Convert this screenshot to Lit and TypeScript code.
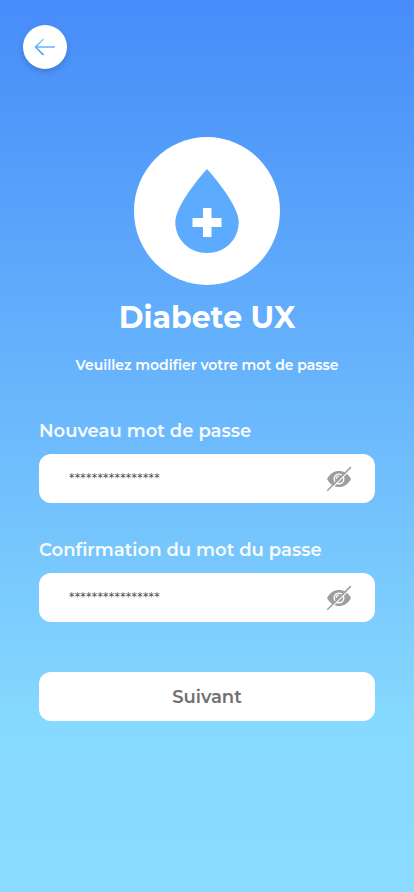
import { LitElement, html, svg, css } from "lit";
import { customElement, property, state } from "lit/decorators.js";

@customElement("password-field")
class PasswordField extends LitElement {
  @property() label = "";
  @state() private visible = false;

  static styles = css`
    :host {
      display: block;
      font-family: Montserrat, Inter, sans-serif;
    }
    .label {
      display: block;
      font-size: 18px;
      line-height: 24px;
      font-weight: 600;
      color: #fff;
      opacity: 0.95;
      margin-bottom: 11px;
      white-space: nowrap;
    }
    .box {
      display: flex;
      align-items: center;
      height: 49px;
      box-sizing: border-box;
      padding: 0 24px 0 30px;
      border-radius: 12px;
      background: #fff;
    }
    .input {
      flex: 1;
      min-width: 0;
      height: 49px;
      box-sizing: border-box;
      padding: 0;
      border: 0;
      outline: 0;
      background: transparent;
      font: 400 14px/20px Montserrat, Inter, sans-serif;
      color: #555;
    }
    .input::placeholder {
      color: #555;
      opacity: 1;
    }
    .toggle {
      display: flex;
      padding: 0;
      border: 0;
      background: none;
      cursor: pointer;
    }
    .icon {
      overflow: visible;
    }
  `;

  render() {
    return html`
      <label class="label" for="field">${this.label}</label>
      <div class="box">
        <input
          class="input"
          id="field"
          type=${this.visible ? "text" : "password"}
          placeholder="****************"
          autocomplete="new-password"
        />
        <button
          class="toggle"
          type="button"
          aria-label="Afficher le mot de passe"
          @click=${() => (this.visible = !this.visible)}
        >
          <svg class="icon" width="24" height="24" viewBox="0 0 24 24" fill="none">
            <path d="M0 12C3 6.500 7 4 12 4S21 6.500 24 12C21 17.500 17 20 12 20S3 17.500 0 12Z" fill="#9e9e9e" />
            <circle cx="12" cy="12" r="4.800" stroke="#fff" stroke-width="1.400" />
            <path d="M12 9.200A2.800 2.800 0 0 0 9.200 12" stroke="#fff" stroke-width="1.100" />
            ${this.visible
              ? null
              : svg`<path d="M1.200 24.600L24.800 1" stroke="#fff" stroke-width="1.300" />
                  <path d="M0.200 23.800L23.900 0.100" stroke="#9e9e9e" stroke-width="1.500" />`}
          </svg>
        </button>
      </div>
    `;
  }
}

@customElement("app-root")
class AppRoot extends LitElement {
  static styles = css`
    :host {
      display: block;
      min-height: 100vh;
      box-sizing: border-box;
      padding: 25px 39px 40px;
      background: linear-gradient(#478cf9 0%, #67b4fc 42%, #87daff 82%, #8adbff 100%);
      font-family: Montserrat, Inter, sans-serif;
      font-variant-ligatures: none;
      color: #fff;
    }
    .back {
      display: flex;
      align-items: center;
      justify-content: center;
      width: 44px;
      height: 44px;
      margin-left: -16px;
      padding: 0;
      border: 0;
      border-radius: 50%;
      background: #fff;
      box-shadow: 0 3px 6px rgba(0, 0, 0, 0.16);
      cursor: pointer;
    }
    .brand {
      display: flex;
      flex-direction: column;
      align-items: center;
      margin-top: 68px;
      text-align: center;
    }
    .title {
      margin: 13px 0 0;
      font-size: 30px;
      line-height: 40px;
      font-weight: 700;
    }
    .subtitle {
      margin: 17px 0 0;
      font-size: 14px;
      line-height: 20px;
      font-weight: 600;
    }
    .form {
      display: flex;
      flex-direction: column;
      gap: 35px;
      margin-top: 44px;
    }
    .submit {
      height: 49px;
      margin-top: 15px;
      border: 0;
      border-radius: 12px;
      background: #fff;
      color: #707070;
      font: 600 18px/24px Montserrat, Inter, sans-serif;
      cursor: pointer;
    }
  `;

  render() {
    return html`
      <button class="back" type="button" aria-label="Retour">
        <svg width="22" height="20" viewBox="0 0 22 20" fill="none">
          <defs>
            <linearGradient id="arrow" gradientUnits="userSpaceOnUse" x1="0" y1="1" x2="0" y2="19">
              <stop offset="0" stop-color="#87daff" />
              <stop offset="1" stop-color="#478cf9" />
            </linearGradient>
          </defs>
          <path d="M9.500 2L1.500 10L9.500 18M1.500 10H21" stroke="url(#arrow)" stroke-width="1.700" />
        </svg>
      </button>
      <main>
        <header class="brand">
          <svg width="146" height="148" viewBox="0 0 146 148">
            <ellipse cx="73" cy="74" rx="73" ry="74" fill="#fff" />
            <path
              d="M73 32C83 43 104.700 70 104.700 85C104.700 103 90.500 116 73 116S41.300 103 41.300 85C41.300 70 63 43 73 32Z"
              fill="#5cabff"
            />
            <path d="M69 71H77.500V81H87.500V90H77.500V100H69V90H58.500V81H69Z" fill="#fff" />
          </svg>
          <h1 class="title">Diabete UX</h1>
          <p class="subtitle">Veuillez modifier votre mot de passe</p>
        </header>
        <form class="form" @submit=${(e: Event) => e.preventDefault()}>
          <password-field label="Nouveau mot de passe"></password-field>
          <password-field label="Confirmation du mot du passe"></password-field>
          <button class="submit" type="submit">Suivant</button>
        </form>
      </main>
    `;
  }
}
